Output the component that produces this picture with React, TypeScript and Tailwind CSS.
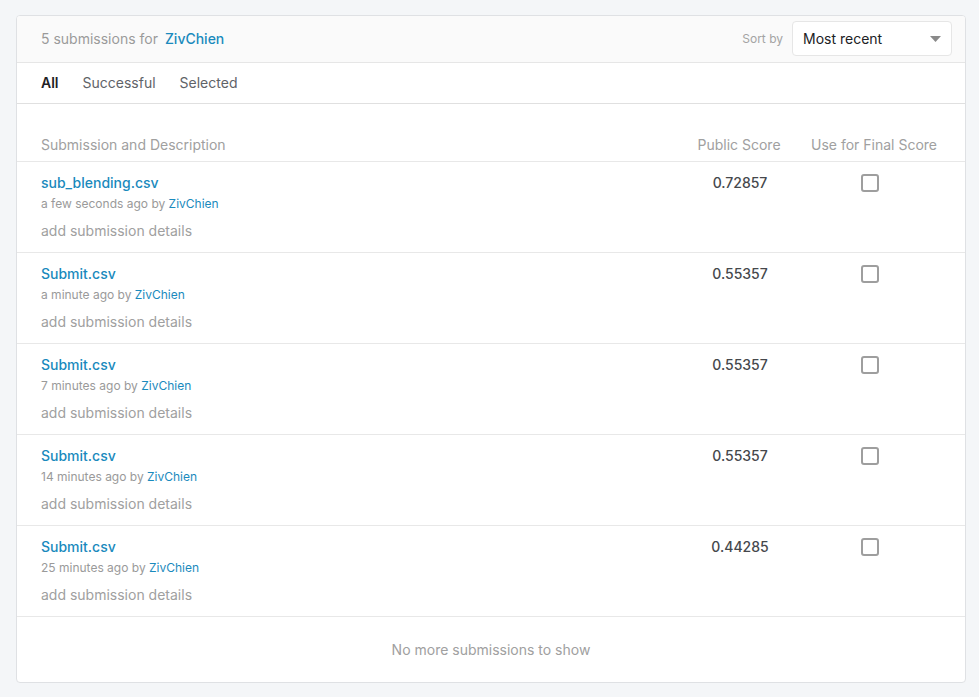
import React from "react";

const rows = [
  { file: "sub_blending.csv", when: "a few seconds ago", score: "0.72857" },
  { file: "Submit.csv", when: "a minute ago", score: "0.55357" },
  { file: "Submit.csv", when: "7 minutes ago", score: "0.55357" },
  { file: "Submit.csv", when: "14 minutes ago", score: "0.55357" },
  { file: "Submit.csv", when: "25 minutes ago", score: "0.44285" },
];

const SubmissionRow = ({ file, when, score }: { file: string; when: string; score: string }) => (
  <div className="flex border-t border-[#e8e8e8] pl-[24px] pr-[13px] pt-[11px] pb-[11px]">
    <div className="flex-1 flex flex-col">
      <a className="text-[14px] leading-[20px] font-medium text-[#1a8abd]">{file}</a>
      <div className="mt-[3px] text-[12px] leading-[16px] text-[#9a9a9a]">
        {when} by <span className="text-[#1a8abd]">ZivChien</span>
      </div>
      <div className="mt-[9px] text-[14px] leading-[20px] text-[#a0a0a0]">add submission details</div>
    </div>
    <div className="w-[100px] mr-[11px] pl-[2px] text-center text-[14px] leading-[20px] font-medium text-[#45484c]">{score}</div>
    <div className="w-[152px] flex justify-center pr-[12px] pt-[1px]">
      <div className="w-[18px] h-[18px] rounded-[3px] border-2 border-[#9e9e9e] bg-white" />
    </div>
  </div>
);

export default function App() {
  return (
    <div className="min-h-[697px] bg-[#f4f6f8] pt-[15px] pl-[16px] font-['Inter',sans-serif]">
      <div className="w-[950px] h-[668px] bg-white border border-[#dfe1e4] rounded-[4px] overflow-hidden flex flex-col">
        <div className="h-[47px] bg-[#fafafa] border-b border-[#e6e6e6] flex items-center pl-[24px] pr-[13px] pb-[1px]">
          <div className="flex-1 text-[14px] text-[#9a9a9a]">
            5 submissions for <span className="ml-[3px] font-medium text-[#1a8abd]">ZivChien</span>
          </div>
          <span className="text-[12px] text-[#a4a4a4] mr-[9px]">Sort by</span>
          <div className="w-[160px] h-[35px] bg-white border border-[#e6e6e6] rounded-[4px] flex items-center pl-[10px] pr-[10px]">
            <span className="flex-1 text-[14px] text-[#202124]">Most recent</span>
            <svg width="11" height="6" viewBox="0 0 11 6">
              <path d="M0 0 L11 0 L5.5 6 Z" fill="#8a8a8a" />
            </svg>
          </div>
        </div>
        <div className="h-[41px] border-b border-[#e0e0e0] flex items-center pl-[24px] gap-[24px] text-[14px] pb-[1px]">
          <span className="font-semibold text-[#202124]">All</span>
          <span className="text-[#5f6368]">Successful</span>
          <span className="text-[#5f6368]">Selected</span>
        </div>
        <div className="flex pl-[24px] pr-[13px] pt-[31px] pb-[6px] text-[14px] leading-[20px] text-[#a0a0a0]">
          <div className="flex-1">Submission and Description</div>
          <div className="w-[100px] mr-[11px] text-center">Public Score</div>
          <div className="w-[152px] pr-[4px] text-center">Use for Final Score</div>
        </div>
        <div>
          {rows.map((r, i) => (
            <SubmissionRow key={i} {...r} />
          ))}
        </div>
        <div className="flex-1 border-t border-[#e8e8e8] flex items-center justify-center text-[14px] text-[#a0a0a0]">
          No more submissions to show
        </div>
      </div>
    </div>
  );
}
